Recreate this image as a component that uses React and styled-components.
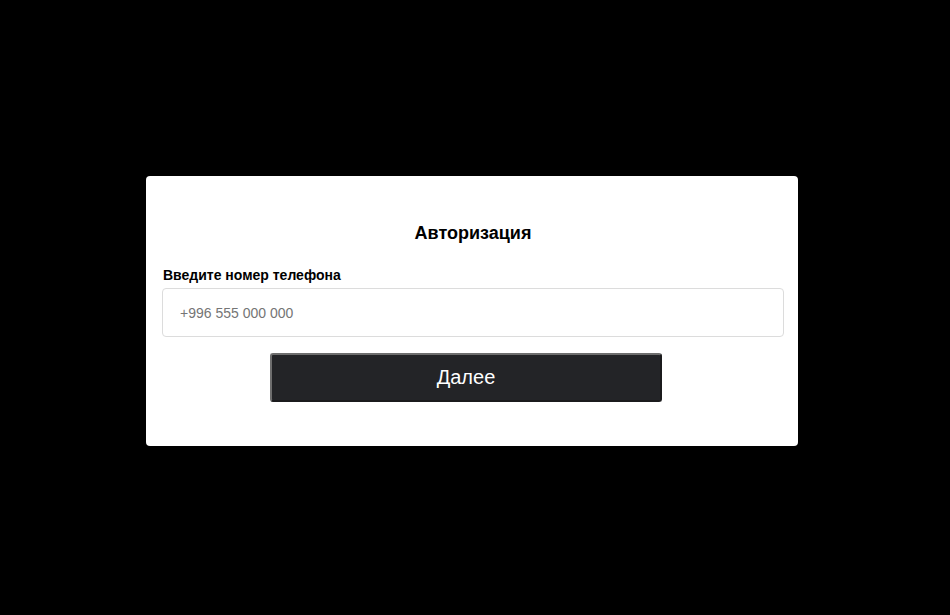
import React from "react";
import styled, { createGlobalStyle } from "styled-components";

const GlobalStyle = createGlobalStyle`
  html, body {
    margin: 0;
    padding: 0;
    background-color: #000;
    font-family: "Liberation Sans", Arial, sans-serif;
  }
`;

const Page = styled.div`
  display: flex;
  align-items: center;
  justify-content: center;
  min-height: 100vh;
  box-sizing: border-box;
  padding: 7px 6px 0 0;
`;

const Card = styled.form`
  width: 652px;
  box-sizing: border-box;
  background-color: #fff;
  border-radius: 4px;
  padding: 47px 14px 44px 16px;
  display: flex;
  flex-direction: column;
`;

const Title = styled.h2`
  margin: 0 0 23px;
  font-size: 18px;
  line-height: 21px;
  font-weight: 700;
  color: #000;
  text-align: center;
`;

const Label = styled.label`
  font-size: 14px;
  font-weight: 700;
  color: #000;
  margin: 0 0 5px 1px;
`;

const Input = styled.input`
  height: 49px;
  box-sizing: border-box;
  border: 1px solid #dcdcdc;
  border-radius: 4px;
  padding: 0 17px;
  font-family: "Liberation Sans", Arial, sans-serif;
  font-size: 14px;
  color: #333;
  outline: none;

  &::placeholder {
    color: #757575;
  }
`;

const Button = styled.button`
  align-self: flex-start;
  margin: 16px 0 0 108px;
  width: 392px;
  height: 49px;
  box-sizing: border-box;
  background-color: #232427;
  color: #fff;
  border-width: 2px;
  border-style: solid;
  border-color: #6e6e6e #1b1b1d #1b1b1d #6e6e6e;
  border-radius: 3px;
  font-family: "Liberation Sans", Arial, sans-serif;
  font-size: 20px;
  cursor: pointer;
`;

const App = () => {
  return (
    <>
      <GlobalStyle />
      <Page>
        <Card onSubmit={(e) => e.preventDefault()}>
          <Title>Авторизация</Title>
          <Label htmlFor="phone">Введите номер телефона</Label>
          <Input id="phone" type="tel" placeholder="+996 555 000 000" />
          <Button type="submit">Далее</Button>
        </Card>
      </Page>
    </>
  );
};

export default App;
